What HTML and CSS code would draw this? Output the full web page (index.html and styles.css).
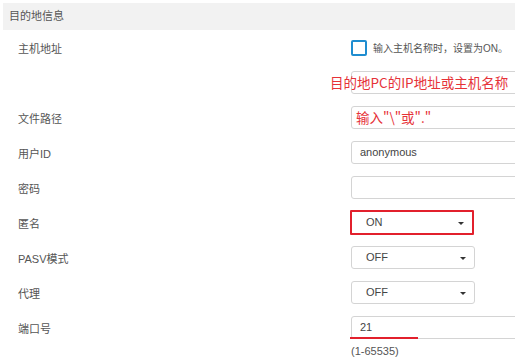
FILE: index.html
```html
<!DOCTYPE html>
<html lang="zh">
  <head>
    <meta charset="UTF-8" />
    <meta name="viewport" content="width=device-width, initial-scale=1.0" />
    <title>目的地信息</title>
    <link rel="stylesheet" href="styles.css">
  </head>
  <body>
    <div class="panel">
      <div class="head">目的地信息</div>
      <div class="row">
        <div class="label">主机地址</div>
        <div class="field">
          <span class="check"></span>
          <span class="note">输入主机名称时，设置为ON。</span>
        </div>
      </div>
      <div class="row">
        <div class="label"></div>
        <div class="field">
          <div class="input"></div>
          <span class="mark mark-ip">目的地PC的IP地址或主机名称</span>
        </div>
      </div>
      <div class="row">
        <div class="label">文件路径</div>
        <div class="field">
          <div class="input"></div>
          <span class="mark mark-path">输入"\"或"."</span>
        </div>
      </div>
      <div class="row">
        <div class="label">用户ID</div>
        <div class="field">
          <div class="input">anonymous</div>
        </div>
      </div>
      <div class="row">
        <div class="label">密码</div>
        <div class="field">
          <div class="input"></div>
        </div>
      </div>
      <div class="row">
        <div class="label">匿名</div>
        <div class="field">
          <div class="select select-hl">ON<span class="caret"></span></div>
        </div>
      </div>
      <div class="row">
        <div class="label">PASV模式</div>
        <div class="field">
          <div class="select">OFF<span class="caret"></span></div>
        </div>
      </div>
      <div class="row">
        <div class="label">代理</div>
        <div class="field">
          <div class="select">OFF<span class="caret"></span></div>
        </div>
      </div>
      <div class="row">
        <div class="label">端口号</div>
        <div class="field">
          <div class="input">21</div>
          <span class="underline"></span>
        </div>
      </div>
      <div class="hint">(1-65535)</div>
    </div>
  </body>
</html>
```

FILE: styles.css
```css
html,
body {
  margin: 0;
  background: #fff;
  overflow: hidden;
}
body {
  padding: 3px 0 0 3px;
  font-family: "Liberation Sans", "Noto Sans CJK SC", sans-serif;
  font-size: 11px;
  color: #555;
}
.panel {
  width: 600px;
}
.head {
  height: 27px;
  line-height: 27px;
  padding-left: 6px;
  background-color: #f2f2f2;
  color: #555;
}
.row {
  display: flex;
  align-items: center;
  height: 35px;
}
.label {
  width: 333px;
  padding-left: 15px;
  flex-shrink: 0;
}
.field {
  position: relative;
  display: flex;
  align-items: center;
  flex: 1;
}
.check {
  width: 12px;
  height: 12px;
  border: 2px solid #1f8dd0;
  border-radius: 2px;
  margin-right: 6px;
}
.note {
  font-size: 10px;
  color: #555;
}
.input {
  width: 240px;
  height: 21px;
  line-height: 21px;
  border: 1px solid #d4d4d4;
  border-radius: 3px;
  padding-left: 8px;
  color: #444;
}
.select {
  position: relative;
  width: 108px;
  height: 21px;
  line-height: 21px;
  border: 1px solid #d4d4d4;
  border-radius: 3px;
  padding-left: 14px;
  color: #444;
}
.select-hl {
  height: 21px;
  width: 106px;
  margin-left: -1px;
  border: 2px solid #e2202c;
  border-radius: 1px;
}
.caret {
  position: absolute;
  right: 8px;
  top: 10px;
  border-left: 3px solid transparent;
  border-right: 3px solid transparent;
  border-top: 3px solid #333;
}
.mark {
  position: absolute;
  top: 2px;
  color: #e63238;
  font-family: "Noto Sans CJK SC", sans-serif;
  font-size: 13.5px;
  line-height: 18px;
}
.mark-ip {
  left: -21px;
}
.mark-path {
  left: 5px;
}
.underline {
  position: absolute;
  left: -1px;
  top: 21px;
  width: 68px;
  height: 2px;
  background: #e2202c;
}
.hint {
  padding-left: 348px;
  margin-top: 0;
  color: #555;
}
```
